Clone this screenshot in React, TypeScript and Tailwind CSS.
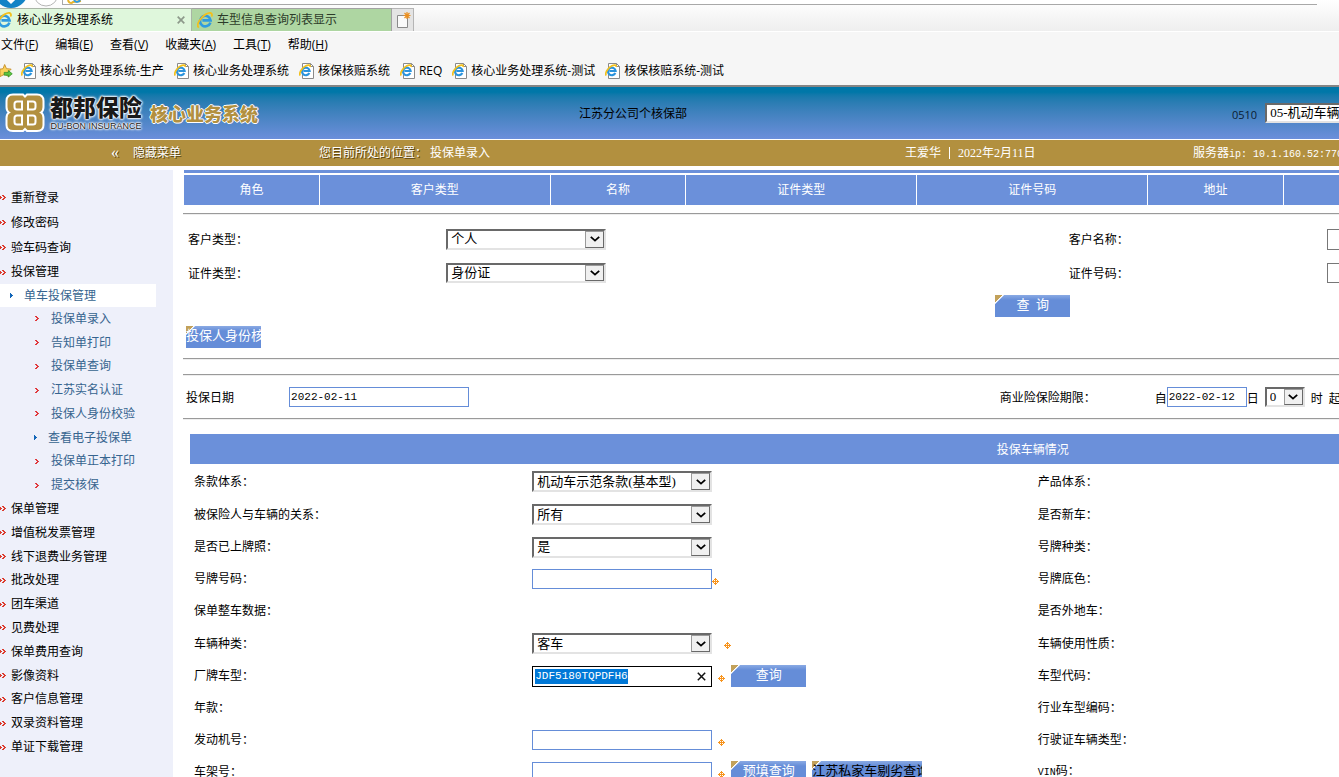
import React, { useEffect, useRef } from "react";

const SONG = "font-['Liberation_Serif','Noto_Sans_CJK_SC',sans-serif]";
const MONO = "font-['Liberation_Mono','Noto_Sans_CJK_SC',monospace]";
const BLUE_BUTTON =
  "h-[22px] shrink-0 overflow-hidden whitespace-nowrap pb-[2px] text-[13px] leading-5 bg-[linear-gradient(135deg,#c2a15a_5px,#ffffff_5px,#ffffff_6px,transparent_7px),linear-gradient(#8aaae4,#658dd8_5px)]";

function IeLogo({ className }: { className: string }) {
  return (
    <svg viewBox="0 0 16 16" className={className} aria-hidden="true">
      <path
        d="M13.4 10.6A5.3 5.3 0 1 1 13.6 8.4H5.4"
        fill="none"
        stroke="#2f9be0"
        strokeWidth="2.6"
      />
      <path
        d="M1.2 15C-.6 12.6 3.4 5.4 8.6 2.4 12.4.2 15.6.4 14.9 3.8"
        fill="none"
        stroke="#f3c01c"
        strokeWidth="1.8"
        strokeLinecap="round"
      />
    </svg>
  );
}

function PageIcon() {
  return (
    <svg viewBox="0 0 16 16" className="size-4 shrink-0" aria-hidden="true">
      <path d="M3.500 .5H11.500L14.500 3.500V15.500H3.500Z" fill="#fff" stroke="#8a8a8a" />
      <path d="M11.500 .5V3.500H14.500" fill="none" stroke="#8a8a8a" />
      <path d="M10.300 10A3.800 3.800 0 1 1 10.600 8H4.500" fill="none" stroke="#2b93dc" strokeWidth="2.200" />
      <path d="M1.200 12.500C-.3 10.500 2.500 5 6.500 3 9.500 1.500 11.500 1.800 11 4" fill="none" stroke="#f3c01c" strokeWidth="1.700" />
    </svg>
  );
}

function FavStar() {
  return (
    <svg viewBox="0 0 14 16" className="h-4 w-[13px] shrink-0" aria-hidden="true">
      <path d="M5 1L7 5.500 12 6 8.500 9.500 9.500 14 5 11.500 0 14V6L3.300 5.500Z" fill="#fbd25a" stroke="#c8912b" />
      <path d="M4.500 9.500H9V7.500L13.200 11 9 14.500V12.500H4.500Z" fill="#5cc53f" stroke="#2f8d22" strokeWidth=".8" />
    </svg>
  );
}

function DoubleChevron() {
  return (
    <svg viewBox="0 0 6 5" className="h-[5px] w-[6px] shrink-0" shapeRendering="crispEdges" aria-hidden="true">
      <path d="M0 1h1v1H0zM0 2h2v1H0zM0 3h1v1H0zM2 0h2v1H2zM3 1h2v1H3zM4 2h2v1H4zM3 3h2v1H3zM2 4h2v1H2z" fill="#dc3a2c" />
    </svg>
  );
}

function Chevron() {
  return (
    <svg viewBox="0 0 4 5" className="h-[5px] w-1 shrink-0" shapeRendering="crispEdges" aria-hidden="true">
      <path d="M0 0h2v1H0zM1 1h2v1H1zM2 2h2v1H2zM1 3h2v1H1zM0 4h2v1H0z" fill="#e0393c" />
    </svg>
  );
}

function BlueTriangle() {
  return (
    <svg viewBox="0 0 4 5" className="h-[5px] w-1 shrink-0" shapeRendering="crispEdges" aria-hidden="true">
      <path d="M0 0h1v1h1v1h1v1H2v1H1v1H0z" fill="#1266b8" />
    </svg>
  );
}

function RequiredMark() {
  return (
    <svg viewBox="0 0 7 7" className="mt-1 size-[7px] shrink-0" shapeRendering="crispEdges" role="img" aria-label="必填">
      <path d="M3 0h1v7H3zM0 3h7v1H0zM2 1h3v1H2zM1 2h1v3H1zM5 2h1v3H5zM2 5h3v1H2z" fill="#f7941d" />
    </svg>
  );
}

function Dropdown({ id, label, value, size }: { id: string; label?: string; value: string; size: string }) {
  return (
    <span className={`relative inline-flex shrink-0 ${size}`}>
      <select
        id={id}
        aria-label={label}
        className={`size-full appearance-none border-2 border-t-[#696969] border-l-[#696969] border-r-[#e3e3e3] border-b-[#e3e3e3] bg-white pb-px pl-[3px] text-[13px] leading-[15px] text-black outline-none ${SONG}`}
      >
        <option>{value}</option>
      </select>
      <span className="pointer-events-none absolute inset-y-[2px] right-[2px] flex w-[19px] items-center justify-center border border-t-[#9a9a9a] border-l-[#9a9a9a] border-r-[#696969] border-b-[#696969] bg-[#f0f0f0]">
        <svg viewBox="0 0 10 6" className="h-[6px] w-[10px]" aria-hidden="true">
          <path d="M.8 .8L5 4.600 9.200 .8" fill="none" stroke="#000" strokeWidth="1.800" />
        </svg>
      </span>
    </span>
  );
}

function TextBox({ id, label, value, size, tone }: { id: string; label?: string; value?: string; size: string; tone?: string }) {
  return (
    <input
      id={id}
      aria-label={label}
      defaultValue={value}
      className={`shrink-0 border bg-white px-px pb-px text-[11px] text-black outline-none ${MONO} ${size} ${tone ?? "border-[#658dd8]"}`}
    />
  );
}

function Rule() {
  return <hr className="h-[2px] border-0 border-t border-b border-t-[#9a9a9a] border-b-[#eeeeee]" />;
}

const favorites = ["核心业务处理系统-生产", "核心业务处理系统", "核保核赔系统", "REQ", "核心业务处理系统-测试", "核保核赔系统-测试"];
const menus = [["文件", "F"], ["编辑", "E"], ["查看", "V"], ["收藏夹", "A"], ["工具", "T"], ["帮助", "H"]];

function BrowserChrome() {
  return (
    <div className="shrink-0 border-b-2 border-[#858585] bg-[#f6f6f6] font-['Open_Sans','Noto_Sans_CJK_SC',sans-serif] text-xs leading-4 text-black">
      <div className="flex h-8 flex-col border-b border-white bg-linear-to-b from-white to-[#eeeeee]">
        <div className="flex h-2 shrink-0 items-start overflow-hidden">
          <svg viewBox="0 0 62 8" className="h-2 w-[62px] shrink-0" aria-hidden="true">
            <circle cx="11" cy="-9" r="17" fill="#1383c6" />
            <path d="M5 -4L11 2 17 -4" fill="none" stroke="#fff" strokeWidth="3" />
            <circle cx="46" cy="-6" r="12" fill="#fff" stroke="#b5b5b5" />
          </svg>
          <div className="mr-[22px] flex h-[5px] flex-1 items-start overflow-hidden border-b border-l border-[#a8a8a8] bg-white pl-1">
            <svg viewBox="0 0 16 4" className="h-1 w-4" aria-hidden="true">
              <path d="M1 0C2 4 5 3 6 2L14 1" fill="none" stroke="#e9b52a" strokeWidth="2" />
              <path d="M7 0C9 3 12 2 13 0" fill="none" stroke="#2f9be0" strokeWidth="2" />
            </svg>
          </div>
        </div>
        <div className="flex min-h-0 flex-1" role="tablist">
          <div role="tab" aria-selected="true" className="flex w-[192px] items-center overflow-hidden border-t border-r border-[#a9b5a6] bg-[#dff7dc] pr-[2px]">
            <IeLogo className="-ml-1 size-4 shrink-0" />
            <span className="ml-[5px] flex-1">核心业务处理系统</span>
            <button aria-label="关闭" className="flex size-4 items-center justify-center">
              <svg viewBox="0 0 8 8" className="size-2" aria-hidden="true">
                <path d="M.7 .7L7.300 7.300M7.300 .7L.7 7.300" stroke="#8d9a8b" strokeWidth="1.700" />
              </svg>
            </button>
          </div>
          <div role="tab" aria-selected="false" className="flex w-[200px] items-center border-t border-r border-[#a3a3a3] bg-[#aed6a2] pl-[5px] text-[#2c3b29]">
            <IeLogo className="size-4 shrink-0" />
            <span className="ml-1">车型信息查询列表显示</span>
          </div>
          <button aria-label="新建选项卡" className="flex w-[22px] items-center justify-center border-t border-r border-[#b5b5b5] bg-[#e4e4e4]">
            <svg viewBox="0 0 16 16" className="size-4" aria-hidden="true">
              <path d="M2.500 3.500H12.500V15.500H2.500Z" fill="#fafafa" stroke="#8a8a8a" />
              <path d="M12 0V7M8.500 3.500H15.500M9.500 1L14.500 6M14.500 1L9.500 6" stroke="#eb8f1f" strokeWidth="1.200" />
            </svg>
          </button>
        </div>
      </div>
      <div className="flex h-[25px] items-center gap-[17px] pl-px">
        {menus.map(([name, key]) => (
          <button key={key} className="whitespace-nowrap">
            {name}(<u>{key}</u>)
          </button>
        ))}
      </div>
      <div className="flex h-7 items-center gap-2 whitespace-nowrap">
        <FavStar />
        <div className="flex items-center gap-[10px]">
          {favorites.map((name) => (
            <a key={name} href="#" className="flex items-center gap-[3px]">
              <PageIcon />
              {name}
            </a>
          ))}
        </div>
      </div>
    </div>
  );
}

function Banner() {
  return (
    <header className="shrink-0">
      <div className="flex h-[52px] items-center bg-linear-to-b from-[#0077a8] from-10% to-[#6b8fdb] text-xs">
        <div className="flex w-[579px] shrink-0 items-center pl-1">
          <svg viewBox="0 0 42 42" className="size-[42px] shrink-0" aria-hidden="true">
            <path
              d="M9 2.500H19L21 4.500 23 2.500H33Q39.500 2.500 39.500 9V15Q39.500 19 37 20.500 39.500 22 39.500 26V33Q39.500 39 33 39H23L21 37 19 39H9Q2.500 39 2.500 33V26Q2.500 22 5 20.500 2.500 19 2.500 15V9Q2.500 2.500 9 2.500Z"
              fill="#b2903f"
              stroke="#fff"
              strokeWidth="2"
            />
            <path
              d="M18 9.500H13Q10.500 9.500 10.500 12V15Q10.500 17.500 13 17.500H18ZM24 9.500H29Q31.500 9.500 31.500 12V15Q31.500 17.500 29 17.500H24ZM18 23.500H13Q10.500 23.500 10.500 26V30Q10.500 32.500 13 32.500H18ZM24 23.500H29Q31.500 23.500 31.500 26V30Q31.500 32.500 29 32.500H24Z"
              fill="none"
              stroke="#fff"
              strokeWidth="2"
            />
          </svg>
          <div className="ml-1 flex flex-col items-center font-['Liberation_Sans','Noto_Sans_CJK_SC',sans-serif] text-[#1a1a1a] [text-shadow:0_0_1px_#fff,0_0_2px_#fff,0_0_2px_#fff,0_0_3px_#fff,0_0_3px_#fff]">
            <span className="text-[23px] leading-[26px] font-black">都邦保险</span>
            <span className="text-[9px] leading-[10px] whitespace-nowrap">DU-BON INSURANCE</span>
          </div>
          <span className="ml-2 pt-1 text-lg leading-6 font-black text-[#b2903f] [text-shadow:1px_0_#fff,-1px_0_#fff,0_1px_#fff,0_-1px_#fff]">
            核心业务系统
          </span>
        </div>
        <span className="flex-1 pt-px">江苏分公司个核保部</span>
        <div className="flex w-[107px] shrink-0 items-center gap-2 overflow-hidden">
          <label htmlFor="risk" className="pt-1 font-['Open_Sans',sans-serif] text-[11px] text-[#0b1c33]">0510</label>
          <Dropdown id="risk" value="05-机动车辆" size="h-5 w-[120px]" />
        </div>
      </div>
      <div className="flex h-[27px] items-center border-t border-white bg-[#b2903f] text-xs whitespace-nowrap text-white">
        <button className="flex w-[319px] shrink-0 items-center gap-[14px] pl-[111px] [text-shadow:1px_1px_#5a4310]">
          <span className="text-base leading-4">«</span>
          <span>隐藏菜单</span>
        </button>
        <div className="flex-1">
          <span className="[text-shadow:1px_1px_#5a4310]">您目前所处的位置：</span> 投保单录入
        </div>
        <div className="flex w-[288px] shrink-0 items-center gap-2">
          <span>王爱华</span>
          <span className="h-3 w-px bg-white" />
          <span>2022年2月11日</span>
        </div>
        <div className="w-[146px] shrink-0 overflow-hidden">
          服务器<span className={`text-[10px] ${MONO}`}>ip: 10.1.160.52:770</span>
        </div>
      </div>
    </header>
  );
}

const accountLinks = ["重新登录", "修改密码", "验车码查询"];
const policyLinks = ["投保单录入", "告知单打印", "投保单查询", "江苏实名认证", "投保人身份校验", "查看电子投保单", "投保单正本打印", "提交核保"];
const moduleLinks = ["保单管理", "增值税发票管理", "线下退费业务管理", "批改处理", "团车渠道", "见费处理", "保单费用查询", "影像资料", "客户信息管理", "双录资料管理", "单证下载管理"];

function TopLink({ name }: { name: string }) {
  return (
    <a href="#" className="flex items-center gap-[5px]">
      <DoubleChevron />
      {name}
    </a>
  );
}

function Sidebar() {
  return (
    <nav className="w-[173px] shrink-0 bg-[#eef0fa] pt-[15px] text-xs leading-4 whitespace-nowrap text-black">
      <ul>
        {accountLinks.map((name) => (
          <li key={name} className="flex h-[25px] items-center">
            <TopLink name={name} />
          </li>
        ))}
        <li>
          <div className="flex h-6 items-center">
            <TopLink name="投保管理" />
          </div>
          <a href="#" className="flex h-[23px] w-[156px] items-center gap-[10px] bg-white pl-[10px] text-[#36648f]">
            <BlueTriangle />
            单车投保管理
          </a>
          <ul className="flex h-[190px] flex-col text-[#36648f]">
            {policyLinks.map((name) => (
              <li key={name} className="flex flex-1 items-center">
                {name === "查看电子投保单" ? (
                  <a href="#" className="flex items-center gap-[10px] pl-[34px]">
                    <BlueTriangle />
                    {name}
                  </a>
                ) : (
                  <a href="#" className="flex items-center gap-3 pl-[35px]">
                    <Chevron />
                    {name}
                  </a>
                )}
              </li>
            ))}
          </ul>
        </li>
      </ul>
      <ul className="flex h-[262px] flex-col">
        {moduleLinks.map((name) => (
          <li key={name} className="flex flex-1 items-center">
            <TopLink name={name} />
          </li>
        ))}
      </ul>
    </nav>
  );
}

function PartyTable() {
  const th = "border-r border-white font-normal";
  return (
    <table className="w-full table-fixed border-separate border-spacing-0 border-t-[3px] border-t-[#6b90da] pt-[2px] text-xs text-white">
      <thead>
        <tr className="h-[30px] bg-[#6b90da]">
          <th className={`w-[8%] ${th}`}>角色</th>
          <th className={`w-[13.6%] ${th}`}>客户类型</th>
          <th className={`w-[8%] ${th}`}>名称</th>
          <th className={`w-[13.6%] ${th}`}>证件类型</th>
          <th className={`w-[13.6%] ${th}`}>证件号码</th>
          <th className={`w-[8%] ${th}`}>地址</th>
          <th className={th} aria-label="其他" />
        </tr>
      </thead>
    </table>
  );
}

function SelectedModelInput() {
  const ref = useRef<HTMLInputElement>(null);
  useEffect(() => {
    ref.current?.focus();
    ref.current?.select();
  }, []);
  return (
    <span className="flex h-[21px] w-[180px] shrink-0 items-center border border-black bg-white pr-[5px]">
      <input
        id="model"
        ref={ref}
        defaultValue="JDF5180TQPDFH6"
        className={`min-w-0 flex-1 px-[2px] text-[11px] leading-[15px] text-black outline-none selection:bg-[#0078d7] selection:text-white ${MONO}`}
      />
      <button aria-label="清除" className="shrink-0">
        <svg viewBox="0 0 9 9" className="size-[9px]" aria-hidden="true">
          <path d="M.8 .8L8.200 8.200M8.200 .8L.8 8.200" stroke="#111" strokeWidth="1.500" />
        </svg>
      </button>
    </span>
  );
}

const carSelect = "h-[21px] w-[180px]";
const carInput = "h-5 w-[180px]";

const vehicleRows: { id?: string; label: string; right: React.ReactNode; height: string; control?: React.ReactNode }[] = [
  { id: "clause", label: "条款体系：", right: "产品体系：", height: "h-[33px]", control: <Dropdown id="clause" value="机动车示范条款(基本型)" size={carSelect} /> },
  { id: "relation", label: "被保险人与车辆的关系：", right: "是否新车：", height: "h-[33px]", control: <Dropdown id="relation" value="所有" size={carSelect} /> },
  { id: "plated", label: "是否已上牌照：", right: "号牌种类：", height: "h-8", control: <Dropdown id="plated" value="是" size={carSelect} /> },
  {
    id: "plate", label: "号牌号码：", right: "号牌底色：", height: "h-8",
    control: (
      <>
        <TextBox id="plate" size={carInput} />
        <RequiredMark />
      </>
    ),
  },
  { label: "保单整车数据：", right: "是否外地车：", height: "h-8" },
  {
    id: "kind", label: "车辆种类：", right: "车辆使用性质：", height: "h-[33px]",
    control: (
      <div className="flex items-center gap-3">
        <Dropdown id="kind" value="客车" size={carSelect} />
        <RequiredMark />
      </div>
    ),
  },
  {
    id: "model", label: "厂牌车型：", right: "车型代码：", height: "h-8",
    control: (
      <div className="flex items-center gap-[6px]">
        <SelectedModelInput />
        <RequiredMark />
        <button className={`w-[75px] text-white ${BLUE_BUTTON}`}>查询</button>
      </div>
    ),
  },
  { label: "年款：", right: "行业车型编码：", height: "h-8" },
  {
    id: "engine", label: "发动机号：", right: "行驶证车辆类型：", height: "h-8",
    control: (
      <div className="flex items-center gap-[6px]">
        <TextBox id="engine" size={carInput} />
        <RequiredMark />
      </div>
    ),
  },
  {
    id: "frame", label: "车架号：", right: <><span className={`text-[10px] ${MONO}`}>VIN</span>码：</>, height: "h-8",
    control: (
      <div className="flex items-center gap-[6px]">
        <TextBox id="frame" size={carInput} />
        <RequiredMark />
        <button className={`w-[75px] text-white ${BLUE_BUTTON}`}>预填查询</button>
        <button className={`w-[110px] text-left text-black ${BLUE_BUTTON}`}>江苏私家车剔劣查询</button>
      </div>
    ),
  },
];

export default function App() {
  return (
    <div className={`flex h-screen flex-col overflow-hidden bg-white text-black ${SONG}`}>
      <BrowserChrome />
      <Banner />
      <div className="flex min-h-0 flex-1 overflow-hidden pt-1">
        <Sidebar />
        <main className="ml-[10px] min-w-0 flex-1 overflow-hidden text-xs leading-4 whitespace-nowrap">
          <div className="w-[147%]">
            <div className="px-px pb-2">
              <PartyTable />
            </div>
            <Rule />
            <section className="px-px pt-[7px] pb-[10px]">
              <div className="grid grid-cols-[258fr_622fr_258fr_558fr] items-center">
                <label htmlFor="ctype" className="flex h-[34px] items-center pt-[2px] pl-1">客户类型：</label>
                <div className="flex pl-1"><Dropdown id="ctype" value="个人" size="h-[21px] w-40" /></div>
                <label htmlFor="cname" className="pt-[2px] pl-1">客户名称：</label>
                <div className="flex pl-1"><TextBox id="cname" size="h-[21px] w-40" tone="border-[#777777]" /></div>
                <label htmlFor="itype" className="flex h-[34px] items-center pt-[2px] pl-1">证件类型：</label>
                <div className="flex pl-1"><Dropdown id="itype" value="身份证" size="h-5 w-40" /></div>
                <label htmlFor="ino" className="pt-[2px] pl-1">证件号码：</label>
                <div className="flex pl-1"><TextBox id="ino" size="h-5 w-40" tone="border-[#777777]" /></div>
              </div>
              <div className="flex justify-center pt-[5px] pb-[9px]">
                <button className={`w-[75px] text-white ${BLUE_BUTTON}`}>查&nbsp; 询</button>
              </div>
              <button className={`ml-[2px] block w-[75px] text-left text-white ${BLUE_BUTTON}`}>投保人身份核</button>
            </section>
            <Rule />
            <div className="h-[14px]" />
            <Rule />
            <section className="grid h-[42px] grid-cols-[103fr_710fr_155fr_728fr] items-center px-px">
              <label htmlFor="applied" className="pt-[2px] pl-[2px]">投保日期</label>
              <div className="flex pl-[2px]"><TextBox id="applied" value="2022-02-11" size="h-5 w-[180px]" /></div>
              <span className="pt-[2px] pl-[2px]">商业险保险期限：</span>
              <div className="flex items-end pl-[2px]">
                <label htmlFor="start">自</label>
                <TextBox id="start" value="2022-02-12" size="h-5 w-20" />
                <span>日</span>
                <span className="ml-[6px] flex"><Dropdown id="hour" label="起始小时" value="0" size="h-5 w-10" /></span>
                <span className="ml-[6px]">时&nbsp; 起</span>
              </div>
            </section>
            <Rule />
            <section className="px-[7px] pt-[14px]">
              <h2 className="mb-px flex h-[30px] items-center justify-center bg-[#6b90da] pt-px text-xs font-normal text-white">投保车辆情况</h2>
              {vehicleRows.map((row) => (
                <div key={row.label} className={`grid grid-cols-[338fr_505fr_837fr] items-center pl-1 ${row.height}`}>
                  {row.id ? <label htmlFor={row.id}>{row.label}</label> : <span>{row.label}</span>}
                  <div className="flex items-center">{row.control}</div>
                  <span>{row.right}</span>
                </div>
              ))}
            </section>
          </div>
        </main>
      </div>
    </div>
  );
}
